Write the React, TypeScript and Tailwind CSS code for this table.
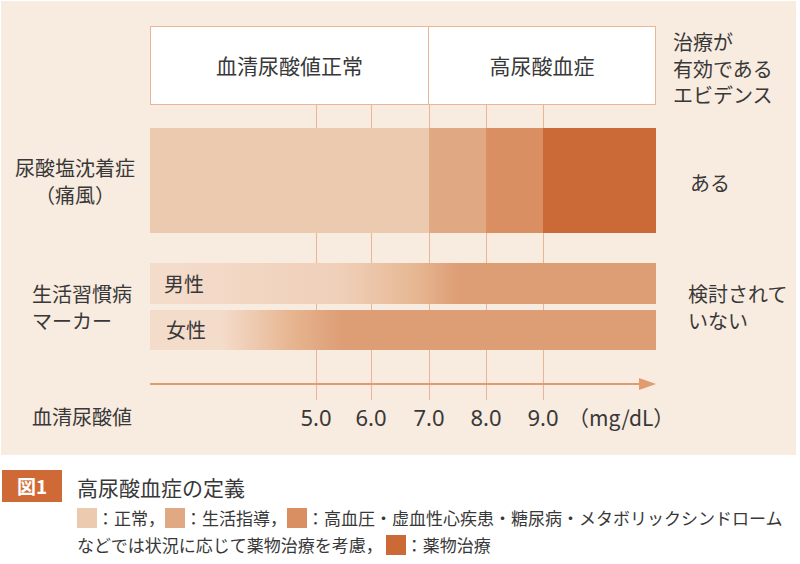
import React from 'react';

const lines = [166, 221, 279, 336, 393];

const ticks = [
  { x: 166, label: '5.0' },
  { x: 221, label: '6.0' },
  { x: 279, label: '7.0' },
  { x: 336, label: '8.0' },
  { x: 393, label: '9.0' },
];

const Swatch: React.FC<{ color: string }> = ({ color }) => (
  <span className={`inline-block w-[20px] h-[20px] align-middle ${color}`} />
);

const App: React.FC = () => {
  return (
    <div
      className="w-[800px] h-[564px] bg-white text-[#383838] overflow-hidden"
      style={{ fontFamily: '"Noto Sans CJK JP", "Noto Sans", sans-serif' }}
    >
      {/* chart panel */}
      <div className="ml-[1px] pt-[1px]">
        <div className="w-[795px] h-[454px] bg-[#F8EBE0] flex flex-col">
          {/* header */}
          <div className="flex mt-[25px] h-[79px]">
            <div className="w-[149px]" />
            <div className="w-[506px] relative flex bg-white border border-[#E9B597]">
              <div className="w-[278px] border-r border-[#E9B597] flex items-center justify-center text-[21px]">
                血清尿酸値正常
              </div>
              <div className="flex-1 flex items-center justify-center text-[21px]">高尿酸血症</div>
            </div>
            <div className="flex-1 pl-[17px] pt-[3px] text-[20px] leading-[26.5px] whitespace-nowrap">
              <div>治療が</div>
              <div>有効である</div>
              <div>エビデンス</div>
            </div>
          </div>

          {/* body with grid lines */}
          <div className="flex">
            <div className="w-[149px] flex flex-col">
              <div className="mt-[23px] h-[105px] flex items-center justify-end pr-[15px]">
                <div className="text-center text-[20px] leading-[27px]">
                  <div>尿酸塩沈着症</div>
                  <div>（痛風）</div>
                </div>
              </div>
              <div className="mt-[30px] h-[87px] flex items-center justify-end pr-[16px]">
                <div className="text-left text-[20px] leading-[27px] w-[102px]">
                  <div>生活習慣病</div>
                  <div>マーカー</div>
                </div>
              </div>
            </div>

            <div className="w-[506px] relative flex flex-col">
              {lines.map((x) => (
                <div
                  key={x}
                  className="absolute top-0 w-px h-[295px] bg-[#E9B597]"
                  style={{ left: x - 0.5 }}
                />
              ))}

              <div className="relative mt-[23px] h-[105px] flex">
                <div className="w-[279px] bg-[#EBCAAF]" />
                <div className="w-[57px] bg-[#E0A983]" />
                <div className="w-[57px] bg-[#D98F62]" />
                <div className="flex-1 bg-[#CC6A37]" />
              </div>

              <div className="relative mt-[30px] h-[41px] flex items-center pl-[14px] text-[20px] bg-[linear-gradient(to_right,#F4DCCB_4%,#EFCFB8_38%,#E7B894_52%,#DD9E76_61%)]">
                男性
              </div>
              <div className="relative mt-[6px] h-[40px] flex items-center pl-[16px] text-[20px] bg-[linear-gradient(to_right,#F4DCCB_14%,#E6B590_28%,#DD9E76_38%)]">
                女性
              </div>

              <svg className="relative mt-[28px]" width="506" height="12" viewBox="0 0 506 12">
                <line x1="0" y1="6" x2="494" y2="6" stroke="#E29B70" strokeWidth="2.2" />
                <polygon points="489,0 506,6 489,12" fill="#E29B70" />
              </svg>
            </div>

            <div className="flex-1 flex flex-col">
              <div className="mt-[23px] h-[105px] flex items-center pl-[34px] pt-[4px] text-[20px]">ある</div>
              <div className="mt-[30px] h-[87px] flex items-center pl-[32px] text-[20px] leading-[27px]">
                <div>
                  <div>検討されて</div>
                  <div>いない</div>
                </div>
              </div>
            </div>
          </div>

          {/* axis labels */}
          <div className="flex mt-[14px] h-[26px] items-center">
            <div className="w-[149px] flex justify-end pr-[16px]">
              <div className="w-[102px] text-[20px] whitespace-nowrap">血清尿酸値</div>
            </div>
            <div className="w-[506px] relative h-[26px] leading-[26px]">
              {ticks.map((t) => (
                <span
                  key={t.label}
                  className="absolute top-0 -translate-x-1/2 text-[22px]"
                  style={{ left: t.x, fontFamily: '"Noto Sans", sans-serif' }}
                >
                  {t.label}
                </span>
              ))}
              <span className="absolute top-0 left-[418px] text-[21px] whitespace-nowrap">
                （mg/dL）
              </span>
            </div>
          </div>
        </div>
      </div>

      {/* caption */}
      <div className="flex mt-[15px] ml-[2px]">
        <div className="w-[60px] h-[32px] bg-[#CF6A37] text-white font-bold text-[19px] flex items-center justify-center shrink-0">
          図1
        </div>
        <div className="ml-[15px] flex flex-col">
          <div className="text-[21px] leading-[34px] h-[34px]">高尿酸血症の定義</div>
          <div className="text-[17px] leading-[27px] whitespace-nowrap flex items-center">
            <Swatch color="bg-[#EBCAAF]" />
            <span>：正常，</span>
            <Swatch color="bg-[#E0A983]" />
            <span>：生活指導，</span>
            <Swatch color="bg-[#D98F62]" />
            <span>：高血圧・虚血性心疾患・糖尿病・メタボリックシンドローム</span>
          </div>
          <div className="text-[17px] leading-[27px] whitespace-nowrap flex items-center">
            <span>などでは状況に応じて薬物治療を考慮，</span>
            <span className="ml-[3px] flex items-center">
              <Swatch color="bg-[#CC6A37]" />
            </span>
            <span>：薬物治療</span>
          </div>
        </div>
      </div>
    </div>
  );
};

export default App;
